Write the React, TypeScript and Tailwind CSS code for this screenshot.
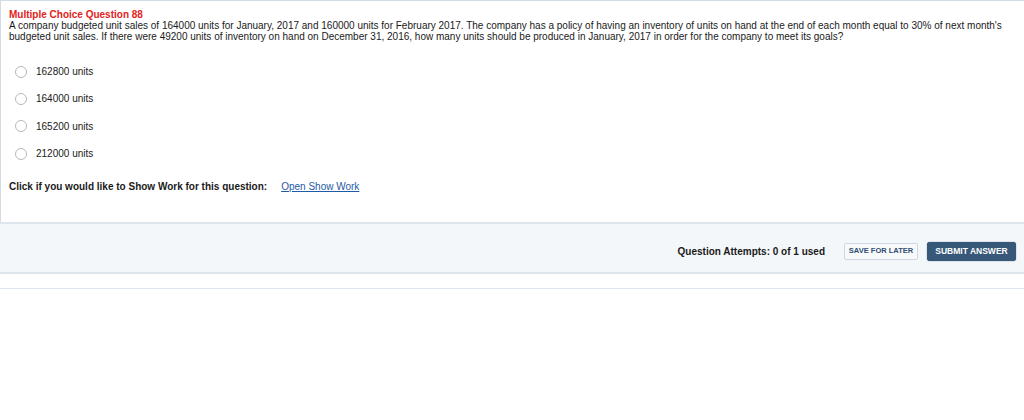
import React from "react";

const options = ["162800 units", "164000 units", "165200 units", "212000 units"];

export default function App() {
  return (
    <div className="w-[1024px] h-[420px] bg-white text-[#1a1a1a]" style={{ fontFamily: '"Liberation Sans", Arial, sans-serif' }}>
      <div className="h-[222px] border-t border-l border-[#d3dce6] pl-[8px] pt-[8px]">
        <div className="text-[10px] font-bold text-[#e3221c] leading-[11px]">Multiple Choice Question 88</div>
        <p className="text-[10px] leading-[11px] pr-2">
          A company budgeted unit sales of 164000 units for January, 2017 and 160000 units for February 2017. The company has a policy of having an inventory of units on hand at the end of each month equal to 30% of next month's budgeted unit sales. If there were 49200 units of inventory on hand on December 31, 2016, how many units should be produced in January, 2017 in order for the company to meet its goals?
        </p>
        <div className="mt-[23px] flex flex-col gap-[14.4px]">
          {options.map((o) => (
            <label key={o} className="flex items-center h-[13px]">
              <span className="ml-[6px] w-[12px] h-[12px] rounded-full border border-[#b8b8b8] bg-white"></span>
              <span className="ml-[9px] text-[10px]">{o}</span>
            </label>
          ))}
        </div>
        <div className="mt-[21px] flex items-center text-[10px] leading-[12px]">
          <span className="font-bold">Click if you would like to Show Work for this question:</span>
          <a className="ml-[14px] text-[#1f5aa6] underline">Open Show Work</a>
        </div>
      </div>
      <div className="h-[52px] border-y-2 border-[#dfe5ec] bg-[#f4f7fa] flex items-center justify-end pr-[8px] pt-[6px]">
        <span className="text-[10px] font-bold mr-[19px]">Question Attempts: 0 of 1 used</span>
        <button className="h-[17px] w-[74px] border border-[#cfd8e2] rounded-[2px] bg-[#f7f9fb] text-[7.5px] font-bold text-[#2d4d73] mr-[9px]">SAVE FOR LATER</button>
        <button className="h-[19px] w-[89px] rounded-[3px] bg-[#375878] text-white text-[8.5px] font-bold shadow-[0_0_1px_#203850]">SUBMIT ANSWER</button>
      </div>
      <div className="mt-[14px] h-[1px] bg-[#dfe5ec]"></div>
    </div>
  );
}
